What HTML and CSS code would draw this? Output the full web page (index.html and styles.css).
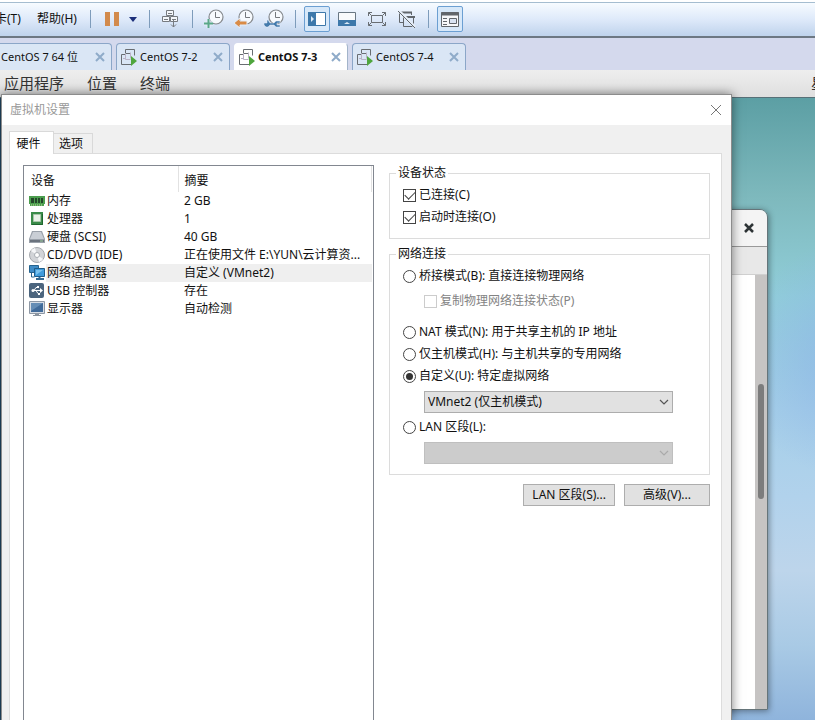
FILE: index.html
```html
<!DOCTYPE html>
<html lang="zh-CN">
<head>
    <meta charset="UTF-8">
    <meta name="viewport" content="width=device-width, initial-scale=1.0">
    <title>虚拟机设置</title>
    <link rel="stylesheet" href="styles.css">
</head>
<body>
    <svg class="defs" width="0" height="0" aria-hidden="true">
        <symbol id="vm" viewBox="0 0 16 17">
            <path d="M4.500 4V.5h9v6M13.500 10.500h-3M4 5.500H.5v10h10v-2M4.500 4.500h5" fill="none" stroke="#696d72"/>
            <path d="M4.500 5v5.500h5M9.500 3.500v6M2 9.500h2" stroke="#b9b2c6" fill="none"/>
            <path d="M10 7l6 5-6 5z" fill="#4fa63d"/>
        </symbol>
        <symbol id="close" viewBox="0 0 10 10">
            <path d="M1 1l8 8M9 1L1 9" stroke="#8fabc9" stroke-width="2" fill="none"/>
        </symbol>
        <symbol id="clock" viewBox="0 0 20 20">
            <circle cx="12" cy="8" r="7" fill="#f7fafd" stroke="#85898d" stroke-width="1.200"/>
            <path d="M11.500 3v5.500H16" fill="none" stroke="#75797d"/>
        </symbol>
        <symbol id="chevron" viewBox="0 0 10 6">
            <path d="M1 1l4 4 4-4" fill="none" stroke="currentColor" stroke-width="1.200"/>
        </symbol>
    </svg>

    <div class="toolbar">
        <a class="menu first" href="#">卡(T)</a>
        <a class="menu" href="#">帮助(H)</a>
        <span class="sep"></span>
        <button class="tool" aria-label="暂停"><svg width="14" height="14"><path d="M0 0h5v14H0zM9 0h5v14H9z" fill="#d28a4c"/></svg></button>
        <button class="tool arrow" aria-label="电源选项"><svg width="8" height="5"><path d="M0 0h8L4 5z" fill="#1c2f7a"/></svg></button>
        <span class="sep"></span>
        <button class="tool" aria-label="发送按键">
            <svg width="17" height="18" fill="#f4f7fb" stroke="#777b80">
                <path d="M4.500.5h7v5h-7zM.5 6.500h7v5h-7zM8.500 6.500h7v5h-7z"/>
                <path d="M11.500 10v7M9 14.500l2.500 2.500 2.500-2.500M6 3.500h4M2 9.500h4M10 9.500h4" fill="none"/>
            </svg>
        </button>
        <span class="sep"></span>
        <button class="tool" aria-label="拍摄快照"><svg width="20" height="20"><use href="#clock"/><path d="M0 14.500h9M4.500 10v9" stroke="#e4edf8" stroke-width="4"/><path d="M0 14.500h9M4.500 10v9" stroke="#5aa888" stroke-width="2"/></svg></button>
        <button class="tool" aria-label="恢复快照"><svg width="20" height="20"><use href="#clock"/><path d="M0 14l6-5v3h7v4H6v3z" fill="#d98b46" stroke="#e4edf8"/></svg></button>
        <button class="tool" aria-label="管理快照"><svg width="20" height="20"><use href="#clock"/><path d="M0 11h3v3H0v2l2 2h2l2-2h4l2 2h4v-2h-3v-2h3v-2h-4l-2 2H6l-2-3H2z" fill="#447bac" stroke="#e4edf8" stroke-width=".5"/></svg></button>
        <span class="sep"></span>
        <button class="tool on" aria-label="显示库"><svg width="18" height="14"><path d="M.5.5h17v13H.5z" fill="#fff" stroke="#3d78aa"/><path d="M0 0h8v14H0z" fill="#3d78aa"/><path d="M3 4l3 3-3 3z" fill="#dceaf6"/></svg></button>
        <button class="tool" aria-label="缩略图栏"><svg width="18" height="14"><path d="M.5.5h17v13H.5z" fill="#f8fafc" stroke="#697783"/><path d="M0 8h18v6H0z" fill="#3d78aa"/><path d="M6 12l3-2 3 2z" fill="#dceaf6"/></svg></button>
        <button class="tool" aria-label="全屏"><svg width="18" height="14" fill="none" stroke="#696e73"><path d="M3.500 3.500h11v7h-11zM.5 4V.5H4M14 .5h3.500V4M17.500 10v3.500H14M4 13.500H.5V10M.5.5l3 3M17.500.5l-3 3M17.500 13.500l-3-3M.5 13.500l3-3"/></svg></button>
        <button class="tool" aria-label="Unity"><svg width="18" height="17" fill="none" stroke="#62676c"><path d="M13.500 1v3M1.500 2v9.500H6"/><path d="M2 1.500h12M6 6h11" stroke-width="2"/><path d="M5.500 5.500h10v10h-10z"/><path d="M1 0l16 16" stroke="#e5edf7" stroke-width="3"/><path d="M0 0l17 17"/></svg></button>
        <span class="sep"></span>
        <button class="tool on" aria-label="控制台视图"><svg width="18" height="15" fill="none" stroke="#62676c"><path d="M.5.5h17v14H.5z" fill="#f7f8fa"/><path d="M0 2h18" stroke-width="3"/><path d="M2 6.500h4M2 9.500h4M2 12.500h4"/><path d="M8.500 6.500h7v5h-7z" fill="#dae4f3"/></svg></button>
    </div>

    <div class="tabs">
        <a class="tab wide" href="#"><svg class="vm" width="16" height="17"><use href="#vm"/></svg><span>CentOS 7 64 位</span><svg class="x" width="10" height="10"><use href="#close"/></svg></a>
        <a class="tab" href="#"><svg class="vm" width="16" height="17"><use href="#vm"/></svg><span>CentOS 7-2</span><svg class="x" width="10" height="10"><use href="#close"/></svg></a>
        <a class="tab active" href="#"><svg class="vm" width="16" height="17"><use href="#vm"/></svg><span>CentOS 7-3</span><svg class="x" width="10" height="10"><use href="#close"/></svg></a>
        <a class="tab" href="#"><svg class="vm" width="16" height="17"><use href="#vm"/></svg><span>CentOS 7-4</span><svg class="x" width="10" height="10"><use href="#close"/></svg></a>
    </div>

    <div class="guestbar">
        <span>应用程序</span>
        <span>位置</span>
        <span>终端</span>
        <span class="clock">星</span>
    </div>

    <div class="desktop">
        <!-- terminal window behind the dialog -->
        <div class="terminal">
            <div class="terminal-title"><button aria-label="关闭"><svg width="10" height="10"><path d="M1 1l8 8M9 1L1 9" stroke="#2e3436" stroke-width="2.500"/></svg></button></div>
            <div class="terminal-menu"></div>
            <div class="terminal-body">
                <div class="scrollbar"><div class="thumb"></div></div>
            </div>
        </div>

        <div class="dialog">
            <div class="titlebar">
                <span>虚拟机设置</span>
                <button aria-label="关闭"><svg width="12" height="12"><path d="M1 1l10 10M11 1L1 11" stroke="#777"/></svg></button>
            </div>
            <div class="dialog-tabs">
                <button class="current">硬件</button>
                <button>选项</button>
            </div>
            <div class="panel">
                <div class="devices">
                    <table>
                        <thead>
                            <tr><th class="name">设备</th><th>摘要</th></tr>
                        </thead>
                        <tbody>
                            <tr>
                                <td><svg width="16" height="16"><path d="M0 3h16v8h-1v2H1v-2H0z" fill="#4c9e4e"/><path d="M2 5h3v5H2zM6 5h2v5H6zM9 5h2v5H9zM12 5h2v5h-2z" fill="#24472a"/><path d="M2 12h12" stroke="#c2d6a2" stroke-dasharray="1 1"/></svg><span>内存</span></td>
                                <td>2 GB</td>
                            </tr>
                            <tr>
                                <td><svg width="16" height="16"><path d="M2 1h12v13H2z" fill="#3a8b49"/><path d="M4.500 3.500h7v7h-7z" fill="#e9f1e8" stroke="#a9c7aa"/><path d="M3 13.500h10.500V3" stroke="#1f652f" fill="none"/></svg><span>处理器</span></td>
                                <td>1</td>
                            </tr>
                            <tr>
                                <td><svg width="16" height="16"><path d="M3 2h10l3 8v4H0v-4z" fill="#9aa1aa"/><path d="M4 3h8l3 7H1z" fill="#c9ced5"/><path d="M1 11h14v2H1z" fill="#6a727d"/><path d="M11 12h3" stroke="#9fd0a0"/></svg><span>硬盘 (SCSI)</span></td>
                                <td>40 GB</td>
                            </tr>
                            <tr>
                                <td><svg width="16" height="16"><circle cx="8" cy="8" r="7.500" fill="#d2d4d8" stroke="#a5a8ad"/><path d="M8 8L2 4a7 7 0 0 1 4-3zM8 8l6 4a7 7 0 0 1-4 3z" fill="#f5f6f8"/><circle cx="8" cy="8" r="2.500" fill="#fff" stroke="#a9adb3"/></svg><span>CD/DVD (IDE)</span></td>
                                <td>正在使用文件 E:\YUN\云计算资...</td>
                            </tr>
                            <tr class="selected">
                                <td><svg width="16" height="16"><path d="M.5.5h9v7h-9z" fill="#3f8cc6" stroke="#27648f"/><path d="M2.500 8v4h3" fill="none" stroke="#27648f"/><path d="M5.500 3.500h10v8h-10z" fill="#3f9bdb" stroke="#205d89"/><path d="M7 5h7l-7 5z" fill="#79c2ed"/><path d="M7 14h8M10.500 12v2" stroke="#346b93" stroke-width="2"/></svg><span>网络适配器</span></td>
                                <td>自定义 (VMnet2)</td>
                            </tr>
                            <tr>
                                <td><svg width="16" height="16"><rect x="0" y="0" width="15" height="15" rx="2" fill="#4c657e"/><path d="M3 7.500h9M5 7.500l2-3h2M7 7.500l2 3h2" fill="none" stroke="#fff"/><path d="M11 5l3 2.500-3 2.500z" fill="#fff"/><circle cx="4" cy="7.500" r="1.500" fill="#fff"/><path d="M8 3h2v2H8zM9 10h2v2H9z" fill="#fff"/></svg><span>USB 控制器</span></td>
                                <td>存在</td>
                            </tr>
                            <tr>
                                <td><svg width="16" height="16"><path d="M.5.5h15v12H.5z" fill="#d7dde5" stroke="#8e98a5"/><path d="M2 2h12v9H2z" fill="#416b9a"/><path d="M2 2h12L2 10z" fill="#658db5"/><path d="M6 13h4v1h2v1H4v-1h2z" fill="#8b949f"/></svg><span>显示器</span></td>
                                <td>自动检测</td>
                            </tr>
                        </tbody>
                    </table>
                </div>

                <div class="settings">
                    <fieldset>
                        <legend>设备状态</legend>
                        <label><input type="checkbox" checked>已连接(C)</label>
                        <label><input type="checkbox" checked>启动时连接(O)</label>
                    </fieldset>
                    <fieldset>
                        <legend>网络连接</legend>
                        <label><input type="radio" name="net">桥接模式(B): 直接连接物理网络</label>
                        <label class="sub"><input type="checkbox" disabled>复制物理网络连接状态(P)</label>
                        <label><input type="radio" name="net">NAT 模式(N): 用于共享主机的 IP 地址</label>
                        <label><input type="radio" name="net">仅主机模式(H): 与主机共享的专用网络</label>
                        <label><input type="radio" name="net" checked>自定义(U): 特定虚拟网络</label>
                        <div class="dropdown">
                            <select aria-label="特定虚拟网络"><option>VMnet2 (仅主机模式)</option></select>
                            <svg width="10" height="6"><use href="#chevron"/></svg>
                        </div>
                        <label><input type="radio" name="net">LAN 区段(L):</label>
                        <div class="dropdown">
                            <select aria-label="LAN 区段" disabled><option></option></select>
                            <svg width="10" height="6"><use href="#chevron"/></svg>
                        </div>
                    </fieldset>
                    <div class="buttons">
                        <button>LAN 区段(S)...</button>
                        <button>高级(V)...</button>
                    </div>
                </div>
            </div>
        </div>
    </div>
</body>
</html>
```
FILE: styles.css
```css
* {
    box-sizing: border-box;
}

body {
    margin: 0;
    min-height: 100vh;
    display: flex;
    flex-direction: column;
    overflow: hidden;
    font-family: "Noto Sans", "Noto Sans CJK SC", sans-serif;
    font-size: 12px;
    line-height: 18px;
    color: #111;
}

a {
    color: inherit;
    text-decoration: none;
}

button,
select {
    font: inherit;
    color: inherit;
    padding: 0;
}

svg {
    flex: none;
}

.defs {
    position: absolute;
}

/* host toolbar */
.toolbar {
    display: flex;
    align-items: center;
    gap: 4px;
    height: 38px;
    border-top: 2px solid #fff;
    border-bottom: 2px solid #6d7883;
    background: linear-gradient(#a5bdd0 1px, #f7fbff 1px, #dfeafa 50%, #bfd3ec);
}

.menu {
    white-space: nowrap;
    margin-right: 5px;
}

.menu.first {
    margin-left: -5px;
    margin-right: 12px;
}

.sep {
    width: 1px;
    height: 18px;
    margin: 0 4px;
    background: #7e9cbb;
}

.tool {
    display: flex;
    align-items: center;
    justify-content: center;
    width: 26px;
    height: 26px;
    border: 0;
    background: none;
}

.tool.arrow {
    width: 12px;
    justify-content: flex-start;
}

.tool.on {
    border: 1px solid #6b9fd2;
    border-radius: 2px;
    background: #d7e8f9;
}

/* vm tabs */
.tabs {
    display: flex;
    align-items: flex-end;
    gap: 4px;
    height: 32px;
    background: #d4d9ed;
}

.tab {
    display: flex;
    align-items: center;
    gap: 3px;
    width: 114px;
    height: 27px;
    padding: 0 6px 0 4px;
    border: 1px solid #8ba6c8;
    border-bottom: 0;
    border-radius: 4px 4px 0 0;
    background: #dae6f5;
    white-space: nowrap;
    font-size: 11px;
}

.tab .x {
    margin-left: auto;
}

.tab.wide {
    width: 135px;
    margin-left: -23px;
}

.tab.active {
    background: #fff;
    border-color: #fff #a3b4ca #fff #fff;
    font-weight: bold;
}

/* guest system */
.guestbar {
    display: flex;
    align-items: center;
    gap: 23px;
    height: 27px;
    padding: 0 0 1px 4px;
    overflow: hidden;
    background: linear-gradient(#eee, #dfdfdf);
    color: #333;
    font-size: 15px;
    white-space: nowrap;
}

.guestbar .clock {
    margin-left: auto;
    margin-right: -11px;
}

.desktop {
    flex: 1;
    display: flex;
    position: relative;
    border-top: 1px solid #577078;
    background:
        linear-gradient(90deg, #244b68 2px, transparent 2px),
        radial-gradient(circle at 105% 42%, rgba(137, 175, 232, 0.7), transparent 120px),
        linear-gradient(#5c9fa4, #7eb9bd 16%, #91ced9 32%, #a5cfe8 50%, #b1d2ec 64%, #bdd5eb 76%, #a9cae5 88%, #8fb4dc);
}

.terminal {
    position: absolute;
    top: 111px;
    right: 47px;
    bottom: 10px;
    width: 200px;
    display: flex;
    flex-direction: column;
    border: 1px solid #66757a;
    border-radius: 0 8px 0 0;
    overflow: hidden;
    box-shadow: 1px 1px 6px rgba(0, 0, 0, 0.4);
}

.terminal-title {
    height: 37px;
    display: flex;
    align-items: center;
    justify-content: flex-end;
    padding-right: 13px;
    border-bottom: 1px solid #999;
    background: #f4f4f4;
}

.terminal-title button {
    display: flex;
    border: 0;
    background: none;
}

.terminal-menu {
    height: 28px;
    border-bottom: 1px solid #d0d0d0;
    background: #e8e8e8;
}

.terminal-body {
    flex: 1;
    display: flex;
    justify-content: flex-end;
    background: #fff;
}

.scrollbar {
    width: 12px;
    padding: 109px 3px 0;
    background: #c6c4c3;
}

.thumb {
    height: 115px;
    border-radius: 3px;
    background: #7c7c7c;
}

/* settings dialog */
.dialog {
    position: relative;
    flex: 1;
    display: flex;
    flex-direction: column;
    min-width: 0;
    margin: -4px 83px 0 1px;
    border: 1px solid #8c8c8c;
    border-bottom: 0;
    background: #f0f0f0;
    box-shadow: 0 0 10px rgba(0, 0, 0, 0.5);
}

.titlebar {
    display: flex;
    align-items: center;
    justify-content: space-between;
    height: 30px;
    padding: 0 9px 0 8px;
    background: #fff;
    color: #999;
}

.titlebar button {
    display: flex;
    border: 0;
    background: none;
}

.dialog-tabs {
    display: flex;
    align-items: flex-end;
    height: 28px;
    padding-left: 7px;
}

.dialog-tabs button {
    width: 39px;
    height: 20px;
    padding: 1px 4px 0 0;
    border: 1px solid #d9d9d9;
    border-width: 1px 1px 0 0;
    background: #f0f0f0;
}

.dialog-tabs .current {
    position: relative;
    width: 45px;
    height: 23px;
    margin-bottom: -1px;
    border-left-width: 1px;
    padding-right: 6px;
    background: #fff;
}

.panel {
    flex: 1;
    display: flex;
    gap: 15px;
    margin: 0 9px 0 7px;
    padding: 11px 11px 0 13px;
    border: 1px solid #dcdcdc;
    border-bottom: 0;
    background: #fff;
}

.devices {
    flex: none;
    width: 351px;
    padding-right: 1px;
    border: 1px solid #828790;
    border-bottom: 0;
}

.devices table {
    width: 100%;
    table-layout: fixed;
    border-collapse: collapse;
}

.devices th {
    height: 26px;
    padding: 4px 6px 0;
    border-right: 1px solid #e2e2e2;
    font-weight: normal;
    text-align: left;
}

.devices .name {
    width: 154px;
    padding-left: 7px;
}

.devices td {
    height: 18px;
    padding: 0 0 0 6px;
    overflow: hidden;
    white-space: nowrap;
    text-overflow: ellipsis;
}

.devices td:first-child {
    display: flex;
    align-items: center;
    gap: 1px;
    padding: 0 0 0 5px;
}

.devices td span {
    flex: 1;
    padding-left: 1px;
}

.selected td:last-child,
.selected span {
    background: #efefef;
}

.settings {
    flex: 1;
    min-width: 0;
}

fieldset {
    min-width: 0;
    margin: 0 0 7px;
    padding: 3px 13px 10px;
    border: 1px solid #dcdcdc;
}

legend {
    margin-left: -7px;
    padding: 0 2px;
    line-height: 16px;
}

label {
    display: flex;
    align-items: center;
    gap: 3px;
    height: 22px;
    white-space: nowrap;
}

label.sub {
    margin: 3px 0 9px 21px;
    color: #838383;
}

input {
    appearance: none;
    flex: none;
    display: grid;
    place-items: center;
    width: 13px;
    height: 13px;
    margin: 0;
    border: 1px solid #444;
    background: #fff;
}

input:disabled {
    border-color: #ccc;
}

input[type="radio"] {
    border-radius: 50%;
}

input[type="radio"]:checked::after {
    content: "";
    width: 7px;
    height: 7px;
    border-radius: 50%;
    background: #333;
}

input[type="checkbox"]:checked::after {
    content: "";
    width: 9px;
    height: 5px;
    margin-bottom: 3px;
    border: solid #444;
    border-width: 0 0 1px 1px;
    transform: rotate(-45deg);
}

.dropdown {
    position: relative;
    width: 249px;
    margin: 4px 0 3px 21px;
}

.dropdown:last-child {
    margin-bottom: 0;
}

.dropdown select {
    appearance: none;
    display: block;
    width: 100%;
    height: 22px;
    padding: 0 20px 0 3px;
    border: 1px solid #adadad;
    border-radius: 0;
    background: #e1e1e1;
}

.dropdown select:disabled {
    border-color: #bfbfbf;
    background: #ccc;
    opacity: 1;
}

.dropdown svg {
    position: absolute;
    top: 8px;
    right: 4px;
    color: #555;
    pointer-events: none;
}

.dropdown select:disabled + svg {
    color: #aaa;
}

.buttons {
    display: flex;
    justify-content: flex-end;
    gap: 9px;
    margin-top: 9px;
}

.buttons button {
    min-width: 86px;
    height: 22px;
    padding: 0 8px;
    border: 1px solid #adadad;
    background: #e1e1e1;
}
```
